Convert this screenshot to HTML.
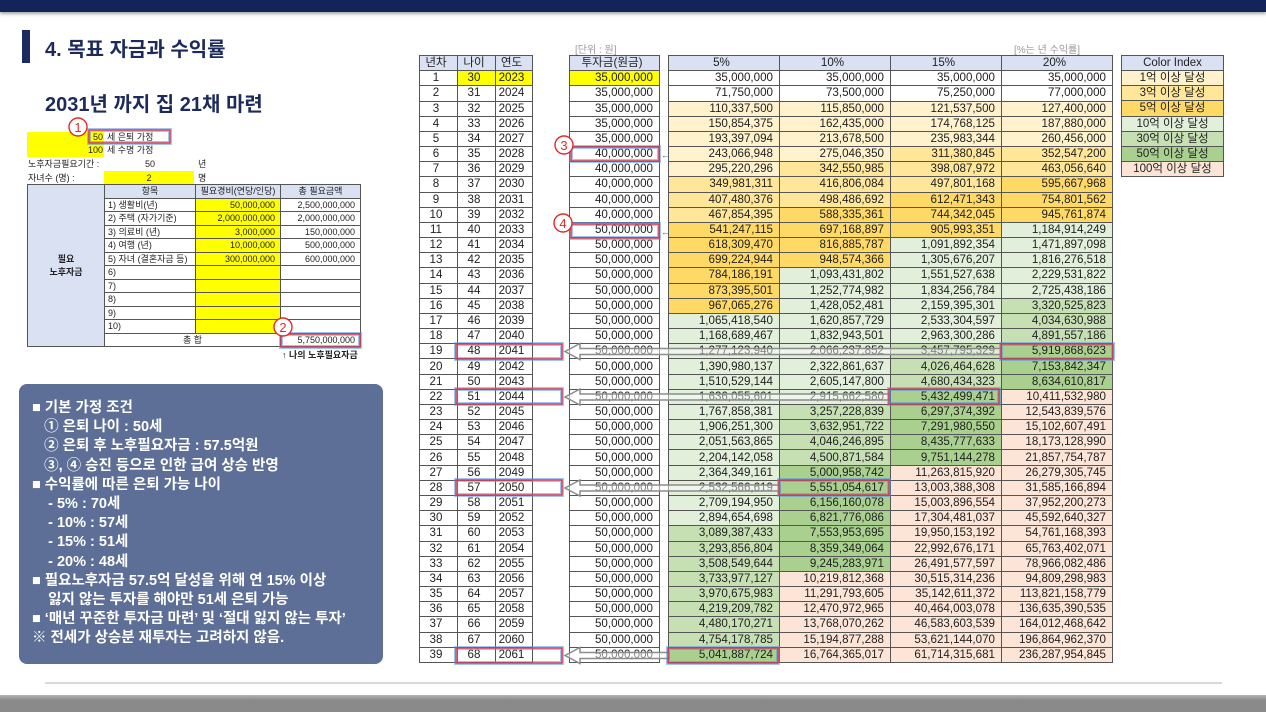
<!DOCTYPE html>
<html><head><meta charset="utf-8">
<style>
*{margin:0;padding:0;box-sizing:border-box}
body{width:1266px;height:712px;position:relative;overflow:hidden;background:#fff;font-family:"Liberation Sans","Noto Sans CJK KR",sans-serif;color:#222}
.abs{position:absolute}
#top{left:0;top:0;width:1266px;height:12px;background:#13245a;box-shadow:0 2px 3px rgba(0,0,0,.35)}
#bot{left:0;top:695px;width:1266px;height:17px;background:linear-gradient(#b5b5b5,#8a8a8a 30%,#8a8a8a)}
#hr{left:45px;top:682px;width:1177px;height:2px;background:#d9d9d9}
#bar{left:22px;top:30px;width:8px;height:33px;background:#1c2a62}
.ttl{font-family:"Liberation Sans","Noto Sans CJK KR",sans-serif;font-weight:bold;color:#1c2a5c}
table{border-collapse:collapse;table-layout:fixed}
#mt{left:419px;top:55px;width:693px;height:608px;font-size:11.6px}
#mt td{border:1px solid #555;text-align:center;padding:0 5px 0 0;line-height:12px;overflow:hidden;white-space:nowrap}
#mt td.r{text-align:right;padding-right:6px}
#mt tr.h td{background:#d9e1f2}
#mt tr td.s{border:none;background:transparent}
.y{background:#ffff00}
.a{background:#fff2cc}.b{background:#ffe699}.c{background:#ffd966}.d{background:#e2efda}.e{background:#c6e0b4}.f{background:#a9d08e}.g{background:#fce4d6}
#ci{left:1121px;top:55px;width:103px;height:122px;font-size:11.5px}
#ci td{border:1px solid #555;text-align:center;line-height:12px}
#lt{left:27px;top:184px;width:333px;height:163px;font-size:9px}
#lt td{border:1px solid #555;line-height:10px;padding:0 3px;white-space:nowrap}
#lt td.r{text-align:right;padding-right:5px}
.sm{font-size:9px;line-height:10px}
#box{left:19px;top:384px;width:364px;height:280px;background:#5d6f97;border-radius:8px;color:#fff;font-size:14.5px;font-weight:bold;padding:15px 0 0 13px;line-height:19.2px}
#box div{white-space:nowrap}
.gr{color:#999;font-size:10px}
</style></head><body>
<div id="top" class="abs"></div>
<div id="bar" class="abs"></div>
<div class="abs ttl" style="left:45px;top:33px;font-size:20px">4. 목표 자금과 수익률</div>
<div class="abs ttl" style="left:45px;top:88px;font-size:20px">2031년 까지 집 21채 마련</div>

<div class="abs y" style="left:27px;top:132px;width:77px;height:25px"></div>
<div class="abs sm" style="left:89px;top:132px;width:14px;text-align:right">50</div>
<div class="abs sm" style="left:107px;top:132px">세 은퇴 가정</div>
<div class="abs sm" style="left:86px;top:145px;width:17px;text-align:right">100</div>
<div class="abs sm" style="left:107px;top:145px">세 수명 가정</div>
<div class="abs sm" style="left:28px;top:159px">노후자금필요기간 :</div>
<div class="abs sm" style="left:140px;top:159px;width:20px;text-align:center">50</div>
<div class="abs sm" style="left:198px;top:159px">년</div>
<div class="abs sm" style="left:28px;top:173px">자녀수 (명) :</div>
<div class="abs y sm" style="left:104px;top:171px;width:90px;height:13px;text-align:center;padding-top:2px">2</div>
<div class="abs sm" style="left:198px;top:173px">명</div>

<table id="lt" class="abs">
<colgroup><col style="width:77px"><col style="width:91px"><col style="width:85px"><col style="width:80px"></colgroup>
<tr><td rowspan="12" style="background:#d9e1f2;text-align:center;font-weight:bold;line-height:13px">필요<br>노후자금</td><td style="background:#d9e1f2;text-align:center">항목</td><td style="background:#d9e1f2;text-align:center">필요경비(연당/인당)</td><td style="background:#d9e1f2;text-align:center">총 필요금액</td></tr>
<tr><td>1) 생활비(년)</td><td class="r y">50,000,000</td><td class="r">2,500,000,000</td></tr>
<tr><td>2) 주택 (자가기준)</td><td class="r y">2,000,000,000</td><td class="r">2,000,000,000</td></tr>
<tr><td>3) 의료비 (년)</td><td class="r y">3,000,000</td><td class="r">150,000,000</td></tr>
<tr><td>4) 여행 (년)</td><td class="r y">10,000,000</td><td class="r">500,000,000</td></tr>
<tr><td>5) 자녀 (결혼자금 등)</td><td class="r y">300,000,000</td><td class="r">600,000,000</td></tr>
<tr><td>6)</td><td class="y"></td><td></td></tr>
<tr><td>7)</td><td class="y"></td><td></td></tr>
<tr><td>8)</td><td class="y"></td><td></td></tr>
<tr><td>9)</td><td class="y"></td><td></td></tr>
<tr><td>10)</td><td class="y"></td><td></td></tr>
<tr><td colspan="2" style="text-align:center">총 합</td><td class="r">5,750,000,000</td></tr>
</table>
<div class="abs sm" style="left:282px;top:350px;font-weight:bold">↑ 나의 노후필요자금</div>

<div id="box" class="abs">
<div>■ 기본 가정 조건</div>
<div>&nbsp;&nbsp;&nbsp;① 은퇴 나이 : 50세</div>
<div>&nbsp;&nbsp;&nbsp;② 은퇴 후 노후필요자금 : 57.5억원</div>
<div>&nbsp;&nbsp;&nbsp;③, ④ 승진 등으로 인한 급여 상승 반영</div>
<div>■ 수익률에 따른 은퇴 가능 나이</div>
<div>&nbsp;&nbsp;&nbsp;&nbsp;- 5% : 70세</div>
<div>&nbsp;&nbsp;&nbsp;&nbsp;- 10% : 57세</div>
<div>&nbsp;&nbsp;&nbsp;&nbsp;- 15% : 51세</div>
<div>&nbsp;&nbsp;&nbsp;&nbsp;- 20% : 48세</div>
<div>■ 필요노후자금 57.5억 달성을 위해 연 15% 이상</div>
<div>&nbsp;&nbsp;&nbsp;&nbsp;잃지 않는 투자를 해야만 51세 은퇴 가능</div>
<div>■ ‘매년 꾸준한 투자금 마련’ 및 ‘절대 잃지 않는 투자’</div>
<div>※ 전세가 상승분 재투자는 고려하지 않음.</div>
</div>

<div class="abs gr" style="left:575px;top:41px">[단위 : 원]</div>
<div class="abs gr" style="left:1014px;top:41px">[%는 년 수익률]</div>

<table id="mt" class="abs">
<colgroup><col style="width:38px"><col style="width:38px"><col style="width:37px"><col style="width:37px"><col style="width:90px"><col style="width:9px"><col style="width:111px"><col style="width:111px"><col style="width:111px"><col style="width:111px"></colgroup>
<tr class="h"><td>년차</td><td>나이</td><td>연도</td><td class="s"></td><td>투자금(원금)</td><td class="s"></td><td>5%</td><td>10%</td><td>15%</td><td>20%</td></tr>
<tr><td>1</td><td class="y">30</td><td class="y">2023</td><td class="s"></td><td class="r y">35,000,000</td><td class="s"></td><td class="r">35,000,000</td><td class="r">35,000,000</td><td class="r">35,000,000</td><td class="r">35,000,000</td></tr>
<tr><td>2</td><td>31</td><td>2024</td><td class="s"></td><td class="r">35,000,000</td><td class="s"></td><td class="r">71,750,000</td><td class="r">73,500,000</td><td class="r">75,250,000</td><td class="r">77,000,000</td></tr>
<tr><td>3</td><td>32</td><td>2025</td><td class="s"></td><td class="r">35,000,000</td><td class="s"></td><td class="r a">110,337,500</td><td class="r a">115,850,000</td><td class="r a">121,537,500</td><td class="r a">127,400,000</td></tr>
<tr><td>4</td><td>33</td><td>2026</td><td class="s"></td><td class="r">35,000,000</td><td class="s"></td><td class="r a">150,854,375</td><td class="r a">162,435,000</td><td class="r a">174,768,125</td><td class="r a">187,880,000</td></tr>
<tr><td>5</td><td>34</td><td>2027</td><td class="s"></td><td class="r">35,000,000</td><td class="s"></td><td class="r a">193,397,094</td><td class="r a">213,678,500</td><td class="r a">235,983,344</td><td class="r a">260,456,000</td></tr>
<tr><td>6</td><td>35</td><td>2028</td><td class="s"></td><td class="r">40,000,000</td><td class="s"></td><td class="r a">243,066,948</td><td class="r a">275,046,350</td><td class="r b">311,380,845</td><td class="r b">352,547,200</td></tr>
<tr><td>7</td><td>36</td><td>2029</td><td class="s"></td><td class="r">40,000,000</td><td class="s"></td><td class="r a">295,220,296</td><td class="r b">342,550,985</td><td class="r b">398,087,972</td><td class="r b">463,056,640</td></tr>
<tr><td>8</td><td>37</td><td>2030</td><td class="s"></td><td class="r">40,000,000</td><td class="s"></td><td class="r b">349,981,311</td><td class="r b">416,806,084</td><td class="r b">497,801,168</td><td class="r c">595,667,968</td></tr>
<tr><td>9</td><td>38</td><td>2031</td><td class="s"></td><td class="r">40,000,000</td><td class="s"></td><td class="r b">407,480,376</td><td class="r b">498,486,692</td><td class="r c">612,471,343</td><td class="r c">754,801,562</td></tr>
<tr><td>10</td><td>39</td><td>2032</td><td class="s"></td><td class="r">40,000,000</td><td class="s"></td><td class="r b">467,854,395</td><td class="r c">588,335,361</td><td class="r c">744,342,045</td><td class="r c">945,761,874</td></tr>
<tr><td>11</td><td>40</td><td>2033</td><td class="s"></td><td class="r">50,000,000</td><td class="s"></td><td class="r c">541,247,115</td><td class="r c">697,168,897</td><td class="r c">905,993,351</td><td class="r d">1,184,914,249</td></tr>
<tr><td>12</td><td>41</td><td>2034</td><td class="s"></td><td class="r">50,000,000</td><td class="s"></td><td class="r c">618,309,470</td><td class="r c">816,885,787</td><td class="r d">1,091,892,354</td><td class="r d">1,471,897,098</td></tr>
<tr><td>13</td><td>42</td><td>2035</td><td class="s"></td><td class="r">50,000,000</td><td class="s"></td><td class="r c">699,224,944</td><td class="r c">948,574,366</td><td class="r d">1,305,676,207</td><td class="r d">1,816,276,518</td></tr>
<tr><td>14</td><td>43</td><td>2036</td><td class="s"></td><td class="r">50,000,000</td><td class="s"></td><td class="r c">784,186,191</td><td class="r d">1,093,431,802</td><td class="r d">1,551,527,638</td><td class="r d">2,229,531,822</td></tr>
<tr><td>15</td><td>44</td><td>2037</td><td class="s"></td><td class="r">50,000,000</td><td class="s"></td><td class="r c">873,395,501</td><td class="r d">1,252,774,982</td><td class="r d">1,834,256,784</td><td class="r d">2,725,438,186</td></tr>
<tr><td>16</td><td>45</td><td>2038</td><td class="s"></td><td class="r">50,000,000</td><td class="s"></td><td class="r c">967,065,276</td><td class="r d">1,428,052,481</td><td class="r d">2,159,395,301</td><td class="r e">3,320,525,823</td></tr>
<tr><td>17</td><td>46</td><td>2039</td><td class="s"></td><td class="r">50,000,000</td><td class="s"></td><td class="r d">1,065,418,540</td><td class="r d">1,620,857,729</td><td class="r d">2,533,304,597</td><td class="r e">4,034,630,988</td></tr>
<tr><td>18</td><td>47</td><td>2040</td><td class="s"></td><td class="r">50,000,000</td><td class="s"></td><td class="r d">1,168,689,467</td><td class="r d">1,832,943,501</td><td class="r d">2,963,300,286</td><td class="r e">4,891,557,186</td></tr>
<tr><td>19</td><td>48</td><td>2041</td><td class="s"></td><td class="r">50,000,000</td><td class="s"></td><td class="r d">1,277,123,940</td><td class="r d">2,066,237,852</td><td class="r e">3,457,795,329</td><td class="r f">5,919,868,623</td></tr>
<tr><td>20</td><td>49</td><td>2042</td><td class="s"></td><td class="r">50,000,000</td><td class="s"></td><td class="r d">1,390,980,137</td><td class="r d">2,322,861,637</td><td class="r e">4,026,464,628</td><td class="r f">7,153,842,347</td></tr>
<tr><td>21</td><td>50</td><td>2043</td><td class="s"></td><td class="r">50,000,000</td><td class="s"></td><td class="r d">1,510,529,144</td><td class="r d">2,605,147,800</td><td class="r e">4,680,434,323</td><td class="r f">8,634,610,817</td></tr>
<tr><td>22</td><td>51</td><td>2044</td><td class="s"></td><td class="r">50,000,000</td><td class="s"></td><td class="r d">1,636,055,601</td><td class="r d">2,915,662,580</td><td class="r f">5,432,499,471</td><td class="r g">10,411,532,980</td></tr>
<tr><td>23</td><td>52</td><td>2045</td><td class="s"></td><td class="r">50,000,000</td><td class="s"></td><td class="r d">1,767,858,381</td><td class="r e">3,257,228,839</td><td class="r f">6,297,374,392</td><td class="r g">12,543,839,576</td></tr>
<tr><td>24</td><td>53</td><td>2046</td><td class="s"></td><td class="r">50,000,000</td><td class="s"></td><td class="r d">1,906,251,300</td><td class="r e">3,632,951,722</td><td class="r f">7,291,980,550</td><td class="r g">15,102,607,491</td></tr>
<tr><td>25</td><td>54</td><td>2047</td><td class="s"></td><td class="r">50,000,000</td><td class="s"></td><td class="r d">2,051,563,865</td><td class="r e">4,046,246,895</td><td class="r f">8,435,777,633</td><td class="r g">18,173,128,990</td></tr>
<tr><td>26</td><td>55</td><td>2048</td><td class="s"></td><td class="r">50,000,000</td><td class="s"></td><td class="r d">2,204,142,058</td><td class="r e">4,500,871,584</td><td class="r f">9,751,144,278</td><td class="r g">21,857,754,787</td></tr>
<tr><td>27</td><td>56</td><td>2049</td><td class="s"></td><td class="r">50,000,000</td><td class="s"></td><td class="r d">2,364,349,161</td><td class="r f">5,000,958,742</td><td class="r g">11,263,815,920</td><td class="r g">26,279,305,745</td></tr>
<tr><td>28</td><td>57</td><td>2050</td><td class="s"></td><td class="r">50,000,000</td><td class="s"></td><td class="r d">2,532,566,619</td><td class="r f">5,551,054,617</td><td class="r g">13,003,388,308</td><td class="r g">31,585,166,894</td></tr>
<tr><td>29</td><td>58</td><td>2051</td><td class="s"></td><td class="r">50,000,000</td><td class="s"></td><td class="r d">2,709,194,950</td><td class="r f">6,156,160,078</td><td class="r g">15,003,896,554</td><td class="r g">37,952,200,273</td></tr>
<tr><td>30</td><td>59</td><td>2052</td><td class="s"></td><td class="r">50,000,000</td><td class="s"></td><td class="r d">2,894,654,698</td><td class="r f">6,821,776,086</td><td class="r g">17,304,481,037</td><td class="r g">45,592,640,327</td></tr>
<tr><td>31</td><td>60</td><td>2053</td><td class="s"></td><td class="r">50,000,000</td><td class="s"></td><td class="r e">3,089,387,433</td><td class="r f">7,553,953,695</td><td class="r g">19,950,153,192</td><td class="r g">54,761,168,393</td></tr>
<tr><td>32</td><td>61</td><td>2054</td><td class="s"></td><td class="r">50,000,000</td><td class="s"></td><td class="r e">3,293,856,804</td><td class="r f">8,359,349,064</td><td class="r g">22,992,676,171</td><td class="r g">65,763,402,071</td></tr>
<tr><td>33</td><td>62</td><td>2055</td><td class="s"></td><td class="r">50,000,000</td><td class="s"></td><td class="r e">3,508,549,644</td><td class="r f">9,245,283,971</td><td class="r g">26,491,577,597</td><td class="r g">78,966,082,486</td></tr>
<tr><td>34</td><td>63</td><td>2056</td><td class="s"></td><td class="r">50,000,000</td><td class="s"></td><td class="r e">3,733,977,127</td><td class="r g">10,219,812,368</td><td class="r g">30,515,314,236</td><td class="r g">94,809,298,983</td></tr>
<tr><td>35</td><td>64</td><td>2057</td><td class="s"></td><td class="r">50,000,000</td><td class="s"></td><td class="r e">3,970,675,983</td><td class="r g">11,291,793,605</td><td class="r g">35,142,611,372</td><td class="r g">113,821,158,779</td></tr>
<tr><td>36</td><td>65</td><td>2058</td><td class="s"></td><td class="r">50,000,000</td><td class="s"></td><td class="r e">4,219,209,782</td><td class="r g">12,470,972,965</td><td class="r g">40,464,003,078</td><td class="r g">136,635,390,535</td></tr>
<tr><td>37</td><td>66</td><td>2059</td><td class="s"></td><td class="r">50,000,000</td><td class="s"></td><td class="r e">4,480,170,271</td><td class="r g">13,768,070,262</td><td class="r g">46,583,603,539</td><td class="r g">164,012,468,642</td></tr>
<tr><td>38</td><td>67</td><td>2060</td><td class="s"></td><td class="r">50,000,000</td><td class="s"></td><td class="r e">4,754,178,785</td><td class="r g">15,194,877,288</td><td class="r g">53,621,144,070</td><td class="r g">196,864,962,370</td></tr>
<tr><td>39</td><td>68</td><td>2061</td><td class="s"></td><td class="r">50,000,000</td><td class="s"></td><td class="r f">5,041,887,724</td><td class="r g">16,764,365,017</td><td class="r g">61,714,315,681</td><td class="r g">236,287,954,845</td></tr>
</table>

<table id="ci" class="abs">
<tr><td style="background:#d9e1f2">Color Index</td></tr>
<tr><td class="a">1억 이상 달성</td></tr>
<tr><td class="b">3억 이상 달성</td></tr>
<tr><td class="c">5억 이상 달성</td></tr>
<tr><td class="d">10억 이상 달성</td></tr>
<tr><td class="e">30억 이상 달성</td></tr>
<tr><td class="f">50억 이상 달성</td></tr>
<tr><td class="g">100억 이상 달성</td></tr>
</table>

<div id="hr" class="abs"></div>
<div id="bot" class="abs"></div>

<svg class="abs" style="left:0;top:0" width="1266" height="712" xmlns="http://www.w3.org/2000/svg">
<g fill="rgba(255,255,255,0.45)" stroke="#8c8c8c" stroke-width="1.5">
<path d="M565 351.5 L580 343.5 L580 348.5 L1001 348.5 L1001 354.5 L580 354.5 L580 359.5 Z"/>
<path d="M565 397 L580 389 L580 394 L889 394 L889 400 L580 400 L580 405 Z"/>
<path d="M565 488 L580 480 L580 485 L780 485 L780 491 L580 491 L580 496 Z"/>
<path d="M565 655.5 L580 647.5 L580 652.5 L669 652.5 L669 658.5 L580 658.5 L580 663.5 Z"/>
</g>
<g fill="none" stroke="rgba(90,150,230,0.55)" stroke-width="4">
<rect x="89" y="130" width="81" height="13"/>
<rect x="281" y="334" width="79" height="13"/>
<rect x="571" y="147" width="88" height="14"/>
<rect x="571" y="224" width="88" height="14"/>
<rect x="456" y="344" width="106" height="15"/>
<rect x="456" y="389" width="106" height="15"/>
<rect x="456" y="480" width="106" height="15"/>
<rect x="456" y="648" width="106" height="15"/>
<rect x="1001" y="344" width="112" height="15"/>
<rect x="889" y="389" width="110" height="15"/>
<rect x="779" y="480" width="110" height="15"/>
<rect x="668" y="648" width="110" height="15"/>
</g>
<g fill="none" stroke="#e2303e" stroke-width="1.3">
<rect x="89" y="130" width="81" height="13"/>
<rect x="281" y="334" width="79" height="13"/>
<rect x="571" y="147" width="88" height="14"/>
<rect x="571" y="224" width="88" height="14"/>
<rect x="456" y="344" width="106" height="15"/>
<rect x="456" y="389" width="106" height="15"/>
<rect x="456" y="480" width="106" height="15"/>
<rect x="456" y="648" width="106" height="15"/>
<rect x="1001" y="344" width="112" height="15"/>
<rect x="889" y="389" width="110" height="15"/>
<rect x="779" y="480" width="110" height="15"/>
<rect x="668" y="648" width="110" height="15"/>
</g>
<text x="661" y="158" font-size="9" fill="#555">←</text>
<text x="661" y="235" font-size="9" fill="#555">←</text>
<g fill="#fff" stroke="#e02a2a" stroke-width="1.4">
<circle cx="78" cy="127" r="9"/>
<circle cx="283" cy="327" r="9"/>
<circle cx="564" cy="145" r="9"/>
<circle cx="563" cy="223" r="9"/>
</g>
<g fill="#e02a2a" font-size="13" font-family="Liberation Sans, sans-serif" text-anchor="middle">
<text x="78" y="132">1</text>
<text x="283" y="332">2</text>
<text x="564" y="150">3</text>
<text x="563" y="228">4</text>
</g>
</svg>
</body></html>
